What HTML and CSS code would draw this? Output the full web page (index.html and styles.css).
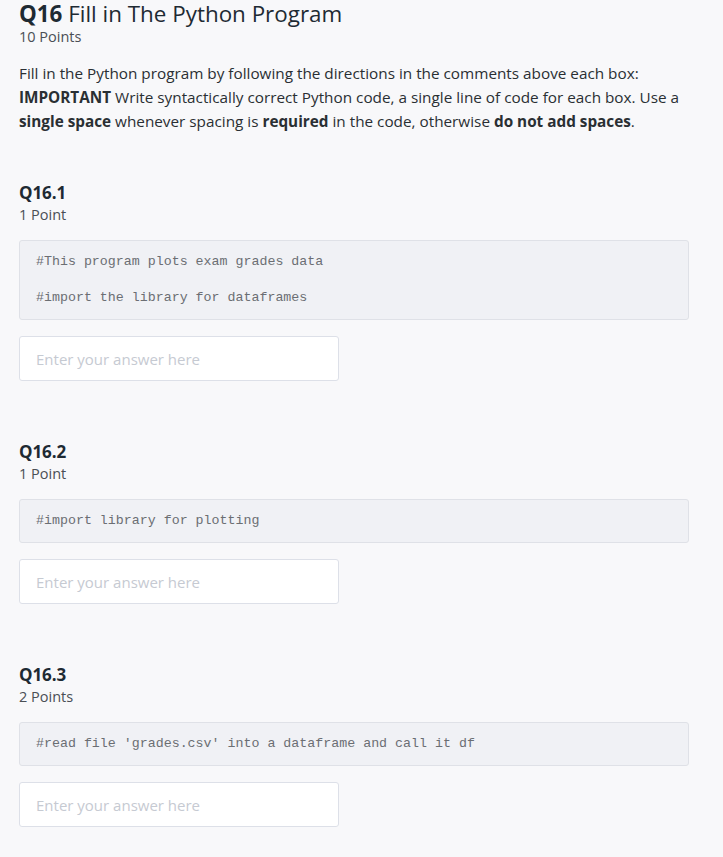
FILE: index.html
```html
<!DOCTYPE html>
<html>
<head>
<meta charset="utf-8">
<link rel="stylesheet" href="styles.css">
</head>
<body>
<div class="page">
  <div class="q-head">
    <h1 class="q-title"><strong>Q16</strong> Fill in The Python Program</h1>
    <div class="points">10 Points</div>
  </div>
  <div class="intro">
    <p>Fill in the Python program by following the directions in the comments above each box: <strong>IMPORTANT</strong> Write syntactically correct Python code, a single line of code for each box. Use a <strong>single space</strong> whenever spacing is <strong>required</strong> in the code, otherwise <strong>do not add spaces</strong>.</p>
  </div>

  <section class="sub">
    <h2 class="sub-title">Q16.1</h2>
    <div class="points">1 Point</div>
    <div class="code">
      <p>#This program plots exam grades data</p>
      <p>#import the library for dataframes</p>
    </div>
    <input class="answer" type="text" placeholder="Enter your answer here">
  </section>

  <section class="sub">
    <h2 class="sub-title">Q16.2</h2>
    <div class="points">1 Point</div>
    <div class="code">
      <p>#import library for plotting</p>
    </div>
    <input class="answer" type="text" placeholder="Enter your answer here">
  </section>

  <section class="sub">
    <h2 class="sub-title">Q16.3</h2>
    <div class="points">2 Points</div>
    <div class="code">
      <p>#read file 'grades.csv' into a dataframe and call it df</p>
    </div>
    <input class="answer" type="text" placeholder="Enter your answer here">
  </section>
</div>
</body>
</html>
```
FILE: styles.css
```css
html, body {
  margin: 0;
  padding: 0;
  background: #f8f8fa;
}
body {
  font-family: "Open Sans", "Liberation Sans", sans-serif;
  color: #2a2f33;
}
.page {
  padding: 1px 34px 0 19px;
}
.q-title {
  margin: 0;
  font-size: 22.4px;
  line-height: 26px;
  font-weight: 400;
  color: #1e2a33;
}
.q-title strong {
  font-weight: 700;
}
.points {
  font-size: 14.5px;
  line-height: 20px;
  color: #4a4f55;
}
.intro {
  margin-top: 14px;
}
.intro p {
  margin: 0;
  font-size: 15.3px;
  line-height: 24px;
  color: #2a2f33;
}
.intro strong {
  font-weight: 700;
}
.sub {
  margin-top: 48px;
}
.sub + .sub {
  margin-top: 59px;
}
.sub-title {
  margin: 0;
  font-size: 17px;
  line-height: 24px;
  font-weight: 700;
  letter-spacing: -0.1px;
  color: #1e2a33;
}
.code {
  margin-top: 15px;
  background: #f0f1f5;
  border: 1px solid #dfe1e7;
  border-radius: 3px;
  padding: 12px 16px;
}
.code p {
  margin: 0;
  font-family: "Liberation Mono", monospace;
  font-size: 13.3px;
  line-height: 18px;
  color: #6b6e73;
}
.code p + p {
  margin-top: 18px;
}
.answer {
  display: block;
  box-sizing: border-box;
  margin-top: 16px;
  width: 320px;
  height: 45px;
  background: #fff;
  border: 1px solid #dde0e8;
  border-radius: 3px;
  padding: 0 16px;
  font-family: "Open Sans", "Liberation Sans", sans-serif;
  font-size: 15px;
  color: #2a2f33;
  outline: none;
}
.answer::placeholder {
  color: #c6cad2;
}
```
